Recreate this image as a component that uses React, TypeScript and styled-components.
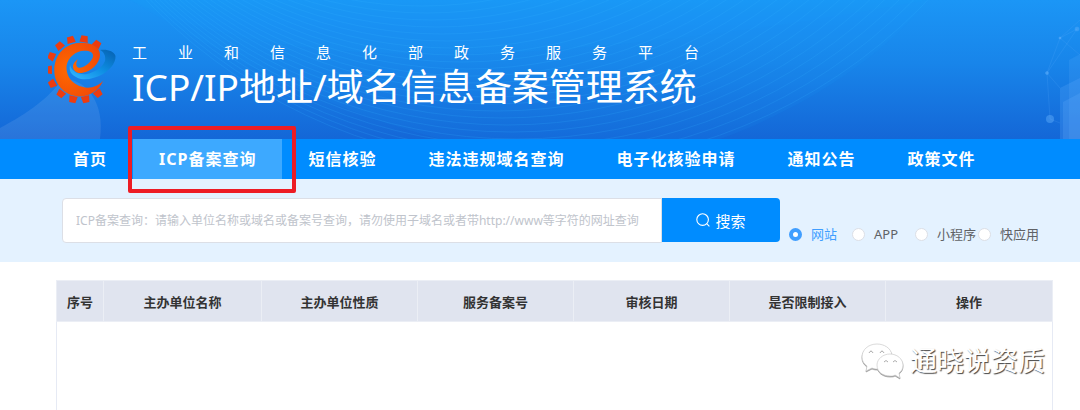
import React, { useState } from "react";
import styled, { createGlobalStyle, css } from "styled-components";

const GlobalStyle = createGlobalStyle`
  *, *::before, *::after { box-sizing: border-box; }
  body {
    margin: 0;
    background: #fff;
    color: #333;
    font-family: "Noto Sans", "Noto Sans CJK SC", sans-serif;
    font-size: 13px;
  }
  button, input { font: inherit; }
`;

const Header = styled.header`
  position: relative;
  overflow: hidden;
  padding: 34px 48px 19px;
  display: flex;
  align-items: flex-start;
  gap: 16px;
  background: linear-gradient(180deg, #1b96f6 0%, #1885ea 45%, #1467d7 100%);
  color: #fff;
`;

const Backdrop = styled.svg`
  position: absolute;
  inset: 0;
  width: 100%;
  height: 100%;
`;

const Emblem = styled.svg`
  position: relative;
  flex: none;
  width: 68px;
  height: 70px;
`;

const Brand = styled.div`
  position: relative;
  padding: 8px 0;
  white-space: nowrap;
`;

const Platform = styled.p`
  margin: 0;
  font-size: 15px;
  line-height: 20px;
  letter-spacing: 31px;
`;

const Title = styled.h1`
  margin: 0;
  font-size: 37px;
  font-weight: 400;
  line-height: 50px;
`;

const Nav = styled.nav`
  display: flex;
  padding: 0 47px;
  background: #008cff;
`;

const NavItem = styled.div`
  position: relative;
`;

const NavLink = styled.a<{ $active?: boolean }>`
  display: block;
  padding: 0 26px;
  color: #fff;
  font-size: 16px;
  font-weight: 700;
  line-height: 40px;
  letter-spacing: 1px;
  white-space: nowrap;
  text-decoration: none;
  ${(p) => p.$active && css`background: #3da9ff;`}
`;

const Highlight = styled.span`
  position: absolute;
  z-index: 1;
  inset: -13px -14px -14px -5px;
  border: 4px solid #ed1c24;
  border-radius: 2px;
  pointer-events: none;
`;

const SearchBar = styled.form`
  display: flex;
  align-items: flex-start;
  padding: 19px 32px 19px 62px;
  background: #e4f2ff;
`;

const Query = styled.input`
  flex: 0 1 600px;
  min-width: 0;
  height: 45px;
  padding: 0 13px;
  border: 1px solid #dcdfe6;
  border-radius: 4px 0 0 4px;
  background: #fff;
  color: #606266;
  font-size: 12px;
  outline: none;
  &::placeholder { color: #c0c4cc; opacity: 1; }
`;

const SearchButton = styled.button`
  flex: none;
  display: flex;
  align-items: center;
  justify-content: center;
  gap: 5px;
  width: 118px;
  height: 44px;
  padding: 0;
  border: 0;
  border-radius: 0 4px 4px 0;
  background: #008cff;
  color: #fff;
  font-size: 15px;
`;

const Kinds = styled.div`
  flex: none;
  display: grid;
  grid-template-columns: repeat(4, 63px);
  padding: 27px 0 0 9px;
`;

const Kind = styled.label`
  display: flex;
  align-items: center;
  gap: 9px;
  color: #606266;
  line-height: 18px;
  white-space: nowrap;
  &:has(input:checked) { color: #409eff; }
`;

const Radio = styled.input`
  appearance: none;
  flex: none;
  width: 13px;
  height: 13px;
  margin: 0;
  border: 1px solid #dcdfe6;
  border-radius: 50%;
  background: #fff;
  &:checked { border: 4px solid #409eff; }
`;

const Results = styled.main`
  position: relative;
  margin: 18px 27px 0 56px;
`;

const Table = styled.table`
  width: 100%;
  table-layout: fixed;
  border-collapse: collapse;
  border: 1px solid #e6eaf4;
  border-bottom: 0;
`;

const HeadCell = styled.th`
  height: 41px;
  padding: 0;
  border: 1px solid #ebeef5;
  background: #e0e4ef;
  color: #333;
  font-size: 13px;
  font-weight: 700;
`;

const EmptyCell = styled.td`
  height: 88px;
  padding: 0;
`;

const Watermark = styled.div`
  position: absolute;
  top: 61px;
  right: 8px;
  display: flex;
  align-items: center;
  gap: 6px;
  color: #fff;
  font-size: 27px;
  line-height: 40px;
  white-space: nowrap;
  text-shadow: 1px 1px 1px #444;
`;

const sections = ["首页", "ICP备案查询", "短信核验", "违法违规域名查询", "电子化核验申请", "通知公告", "政策文件"];
const kinds = ["网站", "APP", "小程序", "快应用"];
const columns: { name: string; width?: number }[] = [
  { name: "序号", width: 47 },
  { name: "主办单位名称", width: 158 },
  { name: "主办单位性质", width: 156 },
  { name: "服务备案号", width: 156 },
  { name: "审核日期", width: 156 },
  { name: "是否限制接入", width: 156 },
  { name: "操作" },
];

const Column = styled.col<{ $width?: number }>`
  width: ${(p) => (p.$width ? `${p.$width}px` : "auto")};
`;

const toothAngles = [-55, -81, -106, -130, -155, 179, 152, 127, 102, 78, 52];

function Logo() {
  return (
    <Emblem viewBox="0 0 68 70" aria-hidden="true">
      <defs>
        <linearGradient id="swoosh" x1="0" y1="1" x2="1" y2="0">
          <stop offset="0" stopColor="#35b8ff" />
          <stop offset="0.5" stopColor="#0e8fe4" />
          <stop offset="1" stopColor="#0560b0" />
        </linearGradient>
        <radialGradient id="ember" cx="0.3" cy="0.5" r="0.7">
          <stop offset="0" stopColor="#ff6a00" />
          <stop offset="1" stopColor="#f04808" />
        </radialGradient>
      </defs>
      <g fill="#ec3c10">
        {toothAngles.map((a) => (
          <path key={a} d="M27.4 -4.2 L34 -3.1 L34 3.1 L27.4 4.2 Z" transform={`translate(31.3 35.3) rotate(${a})`} />
        ))}
      </g>
      <path
        d="M52 16 C59 15 66 17 67.5 22 C68 30 60 37 55 40 C48 44 40 46 33 45 C26 43 20 39 22 31 C24 38 31 41 39 40 C47 38 54 34 57 27 C58 22 56 18 52 16 Z"
        fill="url(#swoosh)"
      />
      <path
        d="M55.3 46.5 C51 57 41 63 30 62.5 C16 61 6 50 6.3 36 C6.5 20 18 9 33 8.8 C44 9 52 13 52 21 C52 29 43 38 33.5 39 C28 39.5 24.5 36 25 31.5 C25.5 29 27.5 27 30 25 C28 28 27.5 32 30 33.5 C35 35 44 28 45 22.5 C45.5 18 41 16.5 36 16.7 C28 17 20 23 18.5 32 C18 40 22 47 28.5 50.5 C38 56 49 54 55.3 46.5 Z"
        fill="url(#ember)"
      />
    </Emblem>
  );
}

function Scenery() {
  return (
    <Backdrop viewBox="0 0 1080 139" preserveAspectRatio="xMinYMin slice" aria-hidden="true">
      <path d="M0 128 C30 112 48 98 62 80 C82 76 106 100 100 139 L0 139 Z" fill="#fff" opacity="0.09" />
      <path d="M130 0 C230 50 380 60 520 52 C700 40 820 20 928 0 Z" fill="#1aa6ff" opacity="0.08" />
      <path d="M130 0 C230 60 330 110 440 139 L720 139 C800 110 880 60 928 0 Z" fill="#1aa6ff" opacity="0.08" />
      <g fill="none" stroke="#35b4ff" strokeWidth="1" opacity="0.18">
        {Array.from({ length: 26 }, (_, i) => (
          <circle key={i} cx={537 - i * 5} cy={-374 - i} r={541 - i * 6} />
        ))}
      </g>
      <g fill="#6cb6ff" stroke="#6cb6ff" strokeWidth="0.6">
        <path d="M1080 20 L1060 38 L1047 73 L1050 119 L1060 123 M1077 29 L1060 38 L1080 55 M1077 29 L1047 73 L1060 88" fill="none" opacity="0.25" />
        <circle cx="1077" cy="29" r="2" opacity="0.4" />
        <circle cx="1060" cy="38" r="1" opacity="0.6" />
        <circle cx="1047" cy="73" r="1.5" opacity="0.5" />
        <circle cx="1050" cy="119" r="4" opacity="0.4" stroke="none" />
        <path d="M1060 88 L1080 78 V139 H1060 Z" opacity="0.2" stroke="none" />
        <path d="M1069 60 L1080 54 V139 H1069 Z" opacity="0.15" stroke="none" />
        <path d="M1063 102 L1080 93 V139 H1063 Z" opacity="0.2" stroke="none" />
      </g>
    </Backdrop>
  );
}

function SearchIcon() {
  return (
    <svg width="14" height="14" viewBox="0 0 14 14" fill="none" stroke="currentColor" strokeWidth="1.1" aria-hidden="true">
      <circle cx="6.6" cy="6.6" r="5.8" />
      <path d="M10.7 10.7 L13.4 13.4" />
    </svg>
  );
}

const Bubbles = styled.svg`
  flex: none;
  filter: drop-shadow(0 1px 0 #999);
`;

function ChatIcon() {
  return (
    <Bubbles width="43" height="38" viewBox="0 0 43 38" fill="#fff" stroke="#ccc" strokeWidth="0.7" aria-hidden="true">
      <path d="M16 2 C7 2 1 8 1 15 C1 19 3 22 6 24 L5 29 L11 26 C13 27 15 27 18 27 C29 27 32 20 31 13 C30 6 23 2 16 2 Z" />
      <path d="M29 12 C22 12 16 17 16 23 C16 30 22 34 29 34 C31 34 33 34 34 33 L39 36 L38 31 C41 29 42 26 42 23 C42 17 36 12 29 12 Z" />
      <path d="M8 11 Q10 7 12 11 M19 11 Q21 7 23 11 M23 20 Q25 17 27 20 M32 20 Q34 17 36 20" fill="none" stroke="#888" />
    </Bubbles>
  );
}

export default function App() {
  const [kind, setKind] = useState(kinds[0]);
  return (
    <>
      <GlobalStyle />
      <Header>
        <Scenery />
        <Logo />
        <Brand>
          <Platform>工业和信息化部政务服务平台</Platform>
          <Title>ICP/IP地址/域名信息备案管理系统</Title>
        </Brand>
      </Header>
      <Nav>
        {sections.map((name, i) => (
          <NavItem key={name}>
            <NavLink href="#" $active={i === 1}>{name}</NavLink>
            {i === 1 && <Highlight />}
          </NavItem>
        ))}
      </Nav>
      <SearchBar onSubmit={(e) => e.preventDefault()}>
        <Query
          type="text"
          aria-label="ICP备案查询"
          placeholder="ICP备案查询：请输入单位名称或域名或备案号查询，请勿使用子域名或者带http://www等字符的网址查询"
        />
        <SearchButton type="submit">
          <SearchIcon />
          搜索
        </SearchButton>
        <Kinds>
          {kinds.map((name) => (
            <Kind key={name}>
              <Radio type="radio" name="kind" checked={kind === name} onChange={() => setKind(name)} />
              {name}
            </Kind>
          ))}
        </Kinds>
      </SearchBar>
      <Results>
        <Table>
          <colgroup>
            {columns.map((c) => <Column key={c.name} $width={c.width} />)}
          </colgroup>
          <thead>
            <tr>{columns.map((c) => <HeadCell key={c.name} scope="col">{c.name}</HeadCell>)}</tr>
          </thead>
          <tbody>
            <tr><EmptyCell colSpan={columns.length} /></tr>
          </tbody>
        </Table>
        <Watermark>
          <ChatIcon />
          通晓说资质
        </Watermark>
      </Results>
    </>
  );
}
